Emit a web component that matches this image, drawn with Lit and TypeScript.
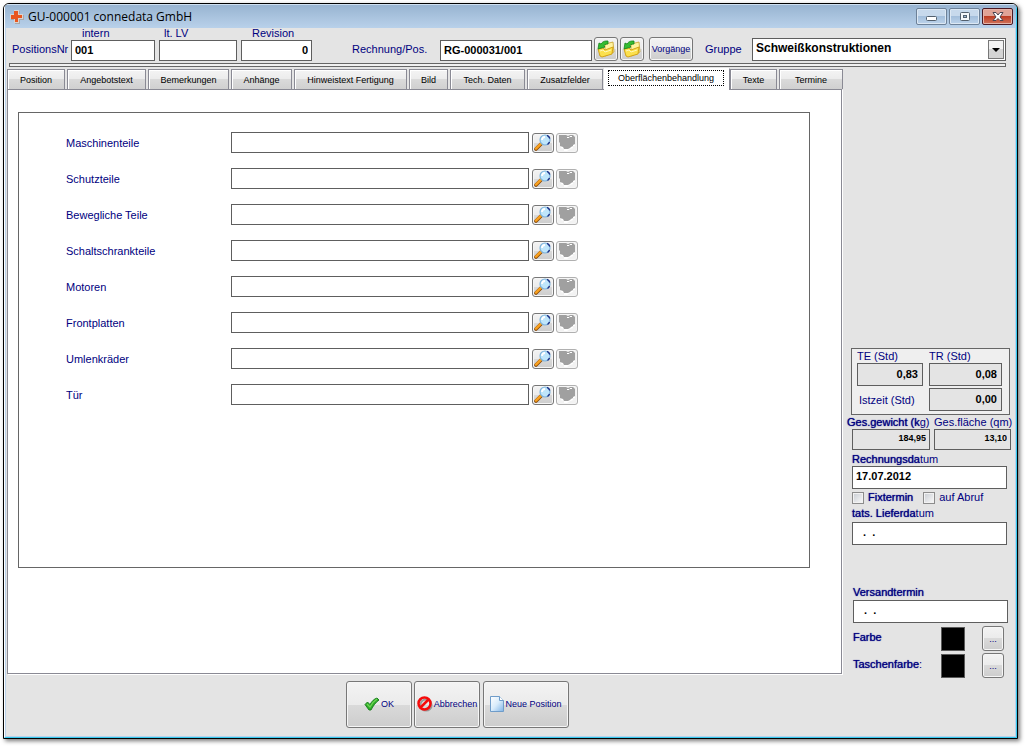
import { LitElement, html, css, svg } from "lit";
import { customElement, state } from "lit/decorators.js";
import { classMap } from "lit/directives/class-map.js";
import { styleMap } from "lit/directives/style-map.js";

const TABS = [
  { name: "Position", width: 58 },
  { name: "Angebotstext", width: 79 },
  { name: "Bemerkungen", width: 81 },
  { name: "Anhänge", width: 61 },
  { name: "Hinweistext Fertigung", width: 113 },
  { name: "Bild", width: 39 },
  { name: "Tech. Daten", width: 75 },
  { name: "Zusatzfelder", width: 76 },
  { name: "Oberflächenbehandlung", width: 125 },
  { name: "Texte", width: 47 },
  { name: "Termine", width: 64 },
];

const PARTS = [
  "Maschinenteile",
  "Schutzteile",
  "Bewegliche Teile",
  "Schaltschrankteile",
  "Motoren",
  "Frontplatten",
  "Umlenkräder",
  "Tür",
];

const logoIcon = html`<svg width="14" height="14" viewBox="0 0 14 14" aria-hidden="true">
  <path d="M5 1h5v4h4v5h-4v4H5v-4H1V5h4z" fill="#a9a6a8" />
  <path d="M4 0h5v4h4v5H9v4H4V9H0V4h4z" fill="#d9d3d0" />
  <path d="M4 1h4v4h4v3H8v4H5V9H1V5h3z" fill="#e8561f" />
</svg>`;

const folderIcon = html`<svg width="18" height="18" viewBox="0 0 18 18" aria-hidden="true">
  <path d="M8 4l8-2 1 10-9 4z" fill="#fff3a0" stroke="#c9a227" stroke-width=".8" />
  <path d="M1 9l5-1 2 2 8-3-1 7-10 3-2-1z" fill="#fbe04d" stroke="#cf9c0c" stroke-width=".9" />
  <path d="M3 11l3-1 2 2 6-2" fill="none" stroke="#fff6b8" />
  <path d="M1 9l1-6 2 1c2-3 4-3 7-3v3C8 4 7 5 7 6l1 1z" fill="#35bd30" stroke="#14821a" stroke-width=".8" />
</svg>`;

const lensIcon = html`<svg width="18" height="17" viewBox="0 0 18 17" aria-hidden="true">
  <path d="M2 15l5-5" stroke="#8a4a08" stroke-width="3.6" stroke-linecap="round" />
  <path d="M2 14.6l5-5" stroke="#f9a11f" stroke-width="2.4" stroke-linecap="round" />
  <circle cx="11" cy="6" r="5" fill="#bfe6fb" stroke="#7fb4dc" stroke-width="1.2" />
  <path d="M13 1.400a5 5 0 0 1 2.800 3M15.500 8a5 5 0 0 1-2 2.500" fill="none" stroke="#1b2f86" stroke-width="1.400" />
  <path d="M8 6a3 3 0 0 1 3-3" fill="none" stroke="#fff" stroke-width="1.800" />
</svg>`;

const clearIcon = html`<svg width="18" height="17" viewBox="0 0 18 17" aria-hidden="true">
  <path d="M2 2h14l1 2v8h-2v2l-3 1-3 2H6v-2l-3-1z" fill="#fff" />
  <path d="M1 1h7l2 1 2-1h3l2 2v7l-2 1v1l-2 1-1 1-2 1H6l-1-2-3-1V9L1 8z" fill="#a0a0a0" />
  <path d="M9 3.500h2l1-1h2" stroke="#fff" fill="none" />
</svg>`;

const checkIcon = html`<svg width="16" height="14" viewBox="0 0 16 14" aria-hidden="true">
  <path d="M1 7.500L3.500 5 6 7.500C8 4 10 2 13 1l2 2C12 5 9 9 7 13H5z" fill="#2fae2a" stroke="#14781a" stroke-width=".9" />
  <path d="M3 7l3 3c2-4 4-6 7-8" stroke="#6fd654" stroke-width="1.300" fill="none" />
</svg>`;

const cancelIcon = html`<svg width="16" height="16" viewBox="0 0 16 16" aria-hidden="true">
  <circle cx="9" cy="9" r="5.600" fill="none" stroke="#999" stroke-width="2" />
  <circle cx="7.500" cy="7.500" r="6" fill="none" stroke="#f50b0b" stroke-width="2.500" />
  <path d="M3.500 11.500l8-8" stroke="#f50b0b" stroke-width="2.500" />
</svg>`;

const pageIcon = html`<svg width="14" height="16" viewBox="0 0 14 16" aria-hidden="true">
  <defs>
    <linearGradient id="sheet" x1="0" y1="0" x2="1" y2="1">
      <stop offset="0" stop-color="#ffffff" />
      <stop offset=".5" stop-color="#d9ecfb" />
      <stop offset="1" stop-color="#7fb3e6" />
    </linearGradient>
  </defs>
  <path d="M.5.500h9l4 4v11H.5z" fill="url(#sheet)" stroke="#6f9cc9" />
  <path d="M9.500.500v4h4" fill="#fff" stroke="#6f9cc9" />
</svg>`;

const glyph = {
  minimize: svg`<rect x="2.500" y="5.500" width="10" height="4" rx="1" fill="#fff" stroke="#53606e" />`,
  maximize: svg`<rect x="3.500" y="1.500" width="9" height="8" rx="1" fill="#f4f7fa" stroke="#53606e" /><rect x="6.500" y="4.500" width="3" height="2" fill="#9fb9d4" stroke="#53606e" />`,
  close: svg`<path d="M3 1.500h3L8 4l2-2.500h3L10 6l3 3.500h-3L8 7.500 6 9.500H3L6 6z" fill="#fff" stroke="#4a4350" />`,
};

@customElement("app-root")
export class AppRoot extends LitElement {
  @state() private active = "Oberflächenbehandlung";

  static styles = css`
    :host {
      display: flex;
      box-sizing: border-box;
      min-height: 100vh;
      padding: 3px 8px 8px 3px;
      background: #fff;
      color: #000080;
      font: 11px/13px "Liberation Sans", Arial, sans-serif;
    }
    * { box-sizing: border-box; }
    .window {
      flex: 1;
      min-width: 0;
      display: flex;
      flex-direction: column;
      border: 1px solid #000;
      border-radius: 6px 6px 0 0;
      background: #e4e4e4;
      box-shadow: 2px 2px 4px #777;
      overflow: hidden;
    }
    .frame {
      flex: 1;
      display: flex;
      flex-direction: column;
      border: 1px solid;
      border-color: #cfe0f1 #35c9ee #35c9ee #fff;
    }
    .body {
      flex: 1;
      display: flex;
      flex-direction: column;
      border: 1px solid #b9d1ea;
      border-top: 0;
    }
    .titlebar {
      display: flex;
      align-items: center;
      height: 23px;
      padding: 0 3px 0 5px;
      gap: 4px;
      background: linear-gradient(#98b4d1, #b9d1ea);
      color: #000;
    }
    .title {
      flex: 1;
      margin: 0;
      font: 12px/16px "Open Sans", "Noto Sans", sans-serif;
    }
    .caption-buttons { display: flex; gap: 2px; }
    .caption-button {
      display: flex;
      align-items: center;
      justify-content: center;
      width: 31px;
      height: 17px;
      padding: 0;
      border: 1px solid #6d8198;
      border-radius: 2px;
      background: linear-gradient(#c7d9ec 45%, #a4bfdc 50%, #bcd3eb);
      box-shadow: inset 0 0 0 1px #dce8f4;
    }
    .caption-button.close {
      border-color: #4c1a24;
      background: linear-gradient(#e0a396 45%, #bd3d24 50%, #d1745c);
      box-shadow: inset 0 0 0 1px #e5b3a8;
    }
    input, select {
      height: 21px;
      margin: 0;
      padding: 0 3px 2px;
      border: 1px solid #5e5e5e;
      border-radius: 0;
      background: #fff;
      color: #000;
      font: bold 11px/13px "Liberation Sans", Arial, sans-serif;
      outline: 0;
    }
    button { font: 9px/12px "Liberation Sans", Arial, sans-serif; color: #000080; }
    .header {
      display: flex;
      align-items: flex-end;
      height: 33px;
      padding: 0 9px 0 6px;
    }
    .header-label { line-height: 23px; white-space: nowrap; }
    .number-label { width: 59px; }
    .field { display: flex; flex-direction: column; margin-right: 4px; }
    .field label { padding-left: 11px; }
    .field.near label { padding-left: 5px; }
    .w-intern { width: 84px; }
    .w-lv { width: 78px; }
    .w-revision { width: 71px; }
    .right { text-align: right; }
    .invoice-label { width: 88px; margin-left: 36px; }
    .w-invoice { width: 152px; margin-right: 2px; }
    .push {
      display: flex;
      align-items: center;
      justify-content: center;
      padding: 0;
      border: 1px solid #777;
      border-radius: 3px;
      background: linear-gradient(#f3f3f3, #ebebeb 50%, #dadada 50%, #cdcdcd);
      box-shadow: inset 0 0 0 1px #f6f6f6;
    }
    .push:disabled { border-color: #b0b0b0; background: #f2f2f2; }
    .tool { width: 24px; height: 24px; margin-right: 2px; }
    .processes { width: 44px; height: 24px; margin-left: 3px; }
    .group-label { width: 47px; margin-left: 12px; }
    .combo { flex: 1; position: relative; display: flex; }
    .combo select {
      flex: 1;
      height: 23px;
      appearance: none;
      font-size: 12px;
    }
    .combo-arrow {
      position: absolute;
      top: 2px;
      right: 2px;
      bottom: 2px;
      width: 16px;
      border: 1px solid #777;
      background: linear-gradient(#f3f3f3 50%, #d4d4d4 50%);
      pointer-events: none;
    }
    .combo-arrow::after {
      content: "";
      position: absolute;
      left: 3px;
      top: 7px;
      border: 4px solid transparent;
      border-top-color: #000;
      border-bottom: 0;
    }
    .rule {
      height: 4px;
      margin: 2px 9px 2px 3px;
      border: 1px solid #666;
      background: #f0f0f0;
    }
    .main { flex: 1; display: flex; }
    .left { flex: 1; min-width: 0; display: flex; flex-direction: column; }
    .tabs {
      display: flex;
      justify-content: flex-start;
      gap: 2px;
      height: 21px;
      padding-left: 1px;
    }
    .tab {
      height: 20px;
      padding: 0;
      border: 1px solid #8a8a94;
      border-width: 1px 1px 0;
      background: linear-gradient(#f4f4f4, #ebebeb 50%, #dadada 50%, #d0d0d0);
      box-shadow: inset 1px 1px #fff;
      color: #000;
      white-space: nowrap;
    }
    .tab.active {
      position: relative;
      z-index: 1;
      height: 22px;
      margin: -1px -2px 0 -1px;
      border-color: #fff #8a8a94 #fff #fff;
      background: #fff;
    }
    .focus { display: block; margin: 0 5px 3px 3px; padding: 1px 0; border: 1px dotted #000; }
    .page {
      flex: 1;
      display: flex;
      margin: -1px 1px 1px;
      padding: 22px 31px 105px 10px;
      border: 1px solid #8a8a94;
      box-shadow: 1px 1px #fff;
      background: #fff;
    }
    .panel {
      flex: 1;
      display: flex;
      flex-direction: column;
      gap: 15px;
      padding: 19px 47px;
      border: 1px solid #666;
    }
    .part { display: flex; align-items: center; height: 21px; }
    .part label { width: 165px; line-height: 15px; padding-top: 2px; }
    .part input { width: 298px; margin-right: 3px; }
    .icon-button { width: 22px; height: 20px; margin-right: 2px; }
    .footer {
      display: flex;
      gap: 2px;
      padding: 6px 0 8px 340px;
    }
    .action { height: 47px; width: 66px; gap: 1px; padding-bottom: 2px; }
    .action.wide { width: 86px; margin-left: 1px; }
    .side { width: 172px; padding: 279px 0 0 8px; }
    .times {
      display: grid;
      grid-template-columns: 66px 73px;
      column-gap: 6px;
      width: 159px;
      height: 67px;
      padding: 1px 5px;
      border: 1px solid #666;
      background: #efefef;
    }
    .side .computed { height: 23px; background: #e4e4e4; text-align: right; }
    .times .computed { width: 100%; margin-bottom: 2px; padding-right: 4px; }
    .times .actual-label { line-height: 24px; padding-left: 2px; white-space: nowrap; }
    .totals {
      display: grid;
      grid-template-columns: 78px 77px;
      column-gap: 4px;
      margin: 0 0 0 1px;
      white-space: nowrap;
    }
    .totals .computed { width: 100%; height: 21px; padding-bottom: 4px; font-size: 9px; }
    .totals .weight-label { margin-left: -5px; }
    .totals label { line-height: 14px; }
    .strong { text-shadow: 0 0 1px #000080; }
    .dates { margin-left: 1px; }
    .date-field { display: block; margin-top: 2px; line-height: 14px; }
    .side .date { display: block; width: 155px; height: 23px; padding-bottom: 4px; }
    .side .date.empty { padding-left: 7px; white-space: pre; }
    .checks { display: flex; align-items: center; height: 17px; gap: 4px; }
    .checks input {
      appearance: none;
      width: 12px;
      height: 12px;
      padding: 0;
      border: 1px solid #8c8c8c;
      background: linear-gradient(135deg, #c8ccd2, #fafafa);
      box-shadow: inset 0 0 0 1px #f2f2f2;
    }
    .checks .first { margin-right: 6px; }
    .delivery { margin-bottom: 2px; line-height: 14px; display: block; }
    .late { margin-left: 2px; }
    .shipping { display: block; margin: 41px 0 1px; }
    .colors {
      display: grid;
      grid-template-columns: 88px 41px 22px;
      row-gap: 2px;
      align-items: center;
      margin-top: 3px;
      line-height: 15px;
    }
    .name { padding-bottom: 2px; }
    .swatch { width: 24px; height: 24px; padding: 0; border: 1px solid #5a5a5a; background: #000; }
    .more { width: 22px; height: 25px; }
  `;

  render() {
    return html`
      <div class="window"><div class="frame">
        <div class="titlebar">
          ${logoIcon}
          <h1 class="title">GU-000001 connedata GmbH</h1>
          <div class="caption-buttons">
            ${(["minimize", "maximize", "close"] as const).map(
              (k) => html`<button class=${classMap({ "caption-button": true, close: k === "close" })} aria-label=${k}>
                <svg width="16" height="11" viewBox="0 0 16 11">${glyph[k]}</svg>
              </button>`
            )}
          </div>
        </div>
        <div class="body">
          ${this.renderHeader()}
          <div class="rule"></div>
          <div class="main">
            <div class="left">
              ${this.renderTabs()}
              <div class="page">
                <div class="panel">
                  ${PARTS.map(
                    (p, i) => html`<div class="part">
                      <label for="part${i}">${p}</label>
                      <input id="part${i}" type="text" />
                      <button class="push icon-button" aria-label="Suchen">${lensIcon}</button>
                      <button class="push icon-button" aria-label="Leeren" disabled>${clearIcon}</button>
                    </div>`
                  )}
                </div>
              </div>
              <div class="footer">
                <button class="push action">${checkIcon}OK</button>
                <button class="push action">${cancelIcon}Abbrechen</button>
                <button class="push action wide">${pageIcon}Neue Position</button>
              </div>
            </div>
            ${this.renderSide()}
          </div>
        </div>
      </div></div>
    `;
  }

  private renderHeader() {
    return html`<div class="header">
      <span class="header-label number-label">PositionsNr</span>
      <div class="field">
        <label for="intern">intern</label>
        <input id="intern" class="w-intern" type="text" value="001" />
      </div>
      <div class="field near">
        <label for="lv">lt. LV</label>
        <input id="lv" class="w-lv" type="text" />
      </div>
      <div class="field">
        <label for="revision">Revision</label>
        <input id="revision" class="w-revision right" type="text" value="0" />
      </div>
      <label class="header-label invoice-label" for="invoice">Rechnung/Pos.</label>
      <input id="invoice" class="w-invoice" type="text" value="RG-000031/001" />
      <button class="push tool" aria-label="Rechnung öffnen">${folderIcon}</button>
      <button class="push tool" aria-label="Position öffnen">${folderIcon}</button>
      <button class="push processes">Vorgänge</button>
      <label class="header-label group-label" for="group">Gruppe</label>
      <div class="combo">
        <select id="group"><option>Schweißkonstruktionen</option></select>
        <span class="combo-arrow"></span>
      </div>
    </div>`;
  }

  private renderTabs() {
    return html`<div class="tabs" role="tablist">
      ${TABS.map((t) => {
        const on = t.name === this.active;
        return html`<button
          class=${classMap({ tab: true, active: on })}
          style=${styleMap({ width: `${on ? t.width + 1 : t.width}px` })}
          role="tab"
          aria-selected=${on ? "true" : "false"}
          @click=${() => (this.active = t.name)}
        >${on ? html`<span class="focus">${t.name}</span>` : t.name}</button>`;
      })}
    </div>`;
  }

  private renderSide() {
    return html`<div class="side">
      <div class="times">
        <label for="te">TE (Std)</label>
        <label for="tr">TR (Std)</label>
        <input id="te" class="computed" readonly value="0,83" />
        <input id="tr" class="computed" readonly value="0,08" />
        <label class="actual-label" for="actual">Istzeit (Std)</label>
        <input id="actual" class="computed" readonly value="0,00" />
      </div>
      <div class="totals">
        <label class="weight-label" for="weight"><span class="strong">Ges.gewicht (k</span>g)</label>
        <label for="area">Ges.fläche (qm)</label>
        <input id="weight" class="computed" readonly value="184,95" />
        <input id="area" class="computed" readonly value="13,10" />
      </div>
      <div class="dates">
        <label class="date-field" for="invoiceDate"><span class="strong">Rechnungsda</span>tum</label>
        <input id="invoiceDate" class="date" type="text" value="17.07.2012" />
        <div class="checks">
          <input id="fixed" type="checkbox" />
          <label class="first strong" for="fixed">Fixtermin</label>
          <input id="call" type="checkbox" />
          <label for="call">auf Abruf</label>
        </div>
        <label class="delivery" for="delivery"><span class="strong">tats. Lieferda</span>tum</label>
        <input id="delivery" class="date empty" type="text" value=" .  ." />
      </div>
      <div class="late">
        <label class="shipping strong" for="shipping">Versandtermin</label>
        <input id="shipping" class="date empty" type="text" value=" .  ." />
        <div class="colors">
          <span class="name strong">Farbe</span>
          <button class="swatch" aria-label="Farbe"></button>
          <button class="push more" aria-label="Farbe wählen">...</button>
          <span class="name"><span class="strong">Taschenfarbe</span>:</span>
          <button class="swatch" aria-label="Taschenfarbe"></button>
          <button class="push more" aria-label="Taschenfarbe wählen">...</button>
        </div>
      </div>
    </div>`;
  }
}
